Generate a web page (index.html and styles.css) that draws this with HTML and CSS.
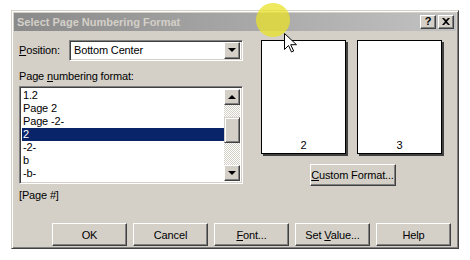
FILE: index.html
```html
<!DOCTYPE html>
<html lang="en">
<head>
  <meta charset="UTF-8" />
  <title>Select Page Numbering Format</title>
  <link rel="stylesheet" href="styles.css">
</head>
<body>
  <div class="dialog">
    <div class="titlebar">
      <span class="title">Select Page Numbering Format</span>
      <div class="caption-buttons">
        <span class="cap-btn">?</span>
        <span class="cap-btn cap-close">
          <svg width="8" height="7" viewBox="0 0 8 7"><path d="M0 0h2l2 2 2-2h2L5 3.5 8 7H6L4 5 2 7H0l3-3.5z" fill="#000"/></svg>
        </span>
      </div>
    </div>

    <div class="content">
      <div class="left">
        <div class="pos-row">
          <label class="lbl"><u>P</u>osition:</label>
          <div class="combo sunken">
            <span class="combo-text">Bottom Center</span>
            <span class="drop-btn"><span class="arrow-down"></span></span>
          </div>
        </div>

        <div class="lbl fmt-label">Page <u>n</u>umbering format:</div>
        <div class="listbox sunken">
          <div class="items">
            <div class="item">1.2</div>
            <div class="item">Page 2</div>
            <div class="item">Page -2-</div>
            <div class="item selected">2</div>
            <div class="item">-2-</div>
            <div class="item">b</div>
            <div class="item">-b-</div>
          </div>
          <div class="scrollbar">
            <span class="sb-btn"><span class="arrow-up"></span></span>
            <div class="sb-track">
              <span class="sb-thumb"></span>
            </div>
            <span class="sb-btn"><span class="arrow-down"></span></span>
          </div>
        </div>
        <div class="lbl code">[Page #]</div>
      </div>

      <div class="right">
        <div class="previews">
          <div class="page"><span>2</span></div>
          <div class="page"><span>3</span></div>
        </div>
        <button class="btn custom-btn"><u>C</u>ustom Format...</button>
      </div>
    </div>

    <div class="buttons">
      <button class="btn">OK</button>
      <button class="btn">Cancel</button>
      <button class="btn"><u>F</u>ont...</button>
      <button class="btn">Set <u>V</u>alue...</button>
      <button class="btn">Help</button>
    </div>
  </div>

  <div class="highlight"></div>
  <svg class="cursor" width="13" height="20" viewBox="0 0 13 20">
    <path d="M0.5 0.5v16l4-4 3 6.5 2.2-1-3-6.3h5.8z" fill="#fff" stroke="#000" stroke-width="1"/>
  </svg>
</body>
</html>
```

FILE: styles.css
```css
body {
  margin: 0;
  padding: 10px 0 0 11px;
  background: #fff;
  font-family: 'Liberation Sans', Arial, sans-serif;
  font-size: 11px;
  letter-spacing: -0.15px;
  color: #000;
}
.dialog {
  box-sizing: border-box;
  width: 448px;
  height: 239px;
  background: #d4d0c8;
  border: 1px solid;
  border-color: #d4d0c8 #404040 #404040 #d4d0c8;
  box-shadow: inset 1px 1px 0 #fff, inset -1px -1px 0 #808080;
  padding: 2px;
  display: flex;
  flex-direction: column;
}
.titlebar {
  height: 18px;
  background: linear-gradient(to right, #8a8a8a, #c2c2c2);
  display: flex;
  align-items: center;
  justify-content: space-between;
  padding: 0 2px 0 3px;
}
.title {
  color: #d4d0c8;
  font-weight: bold;
  font-size: 11px;
  letter-spacing: 0;
}
.caption-buttons {
  display: flex;
  gap: 2px;
}
.cap-btn, .sb-btn, .drop-btn {
  box-sizing: border-box;
  background: #d4d0c8;
  border: 1px solid;
  border-color: #fff #404040 #404040 #fff;
  box-shadow: inset -1px -1px 0 #808080;
  display: flex;
  align-items: center;
  justify-content: center;
}
.cap-btn {
  width: 16px;
  height: 14px;
  font-weight: bold;
  font-size: 11px;
  line-height: 1;
}
.sunken {
  box-sizing: border-box;
  background: #fff;
  border: 1px solid;
  border-color: #808080 #fff #fff #808080;
  box-shadow: inset 1px 1px 0 #404040, inset -1px -1px 0 #d4d0c8;
}
.content {
  display: flex;
  padding: 9px 0 0 5px;
  height: 178px;
}
.left {
  width: 224px;
}
.pos-row {
  display: flex;
  align-items: center;
  justify-content: space-between;
}
.combo {
  width: 174px;
  height: 21px;
  display: flex;
  align-items: center;
  justify-content: space-between;
  padding: 2px;
}
.combo-text {
  padding-left: 2px;
}
.drop-btn {
  width: 16px;
  height: 17px;
}
.arrow-down, .arrow-up {
  width: 0;
  height: 0;
  border-left: 4px solid transparent;
  border-right: 4px solid transparent;
}
.arrow-down {
  border-top: 4px solid #000;
}
.arrow-up {
  border-bottom: 4px solid #000;
}
.fmt-label {
  margin-top: 9px;
  line-height: 13px;
}
.listbox {
  margin-top: 3px;
  height: 98px;
  display: flex;
  padding: 2px;
  overflow: hidden;
}
.items {
  flex: 1;
  overflow: hidden;
}
.item {
  height: 13px;
  line-height: 13px;
  padding-left: 1px;
}
.item.selected {
  background: #0a246a;
  color: #fff;
}
.scrollbar {
  width: 16px;
  display: flex;
  flex-direction: column;
}
.sb-btn {
  width: 16px;
  height: 16px;
}
.sb-track {
  flex: 1;
  background-color: #fff;
  background-image: repeating-conic-gradient(#d4d0c8 0 25%, #fff 0 50%);
  background-size: 2px 2px;
  padding-top: 12px;
}
.sb-thumb {
  display: block;
  box-sizing: border-box;
  height: 26px;
  background: #d4d0c8;
  border: 1px solid;
  border-color: #d4d0c8 #404040 #404040 #d4d0c8;
  box-shadow: inset 1px 1px 0 #fff, inset -1px -1px 0 #808080;
}
.code {
  margin-top: 5px;
  line-height: 13px;
}
.right {
  margin-left: 18px;
  display: flex;
  flex-direction: column;
  align-items: center;
}
.previews {
  display: flex;
  gap: 11px;
}
.page {
  box-sizing: border-box;
  width: 85px;
  height: 114px;
  padding-bottom: 2px;
  background: #fff;
  border: 1px solid #000;
  box-shadow: 2px 2px 0 #404040;
  display: flex;
  align-items: flex-end;
  justify-content: center;
}
.page span {
  line-height: 12px;
}
.btn {
  box-sizing: border-box;
  font-family: 'Liberation Sans', Arial, sans-serif;
  font-size: 11px;
  letter-spacing: -0.15px;
  white-space: nowrap;
  color: #000;
  background: #d4d0c8;
  border: 1px solid;
  border-color: #fff #404040 #404040 #fff;
  box-shadow: inset -1px -1px 0 #808080;
  padding: 0;
}
.custom-btn {
  margin-top: 10px;
  width: 86px;
  height: 22px;
  margin-left: 2px;
}
.buttons {
  display: flex;
  gap: 6px;
  padding: 7px 0 0 38px;
}
.buttons .btn {
  width: 75px;
  height: 23px;
}
.highlight {
  position: absolute;
  left: 256px;
  top: 3px;
  width: 34px;
  height: 34px;
  border-radius: 50%;
  background: rgba(232, 226, 40, 0.75);
}
.cursor {
  position: absolute;
  left: 284px;
  top: 33px;
}
```
